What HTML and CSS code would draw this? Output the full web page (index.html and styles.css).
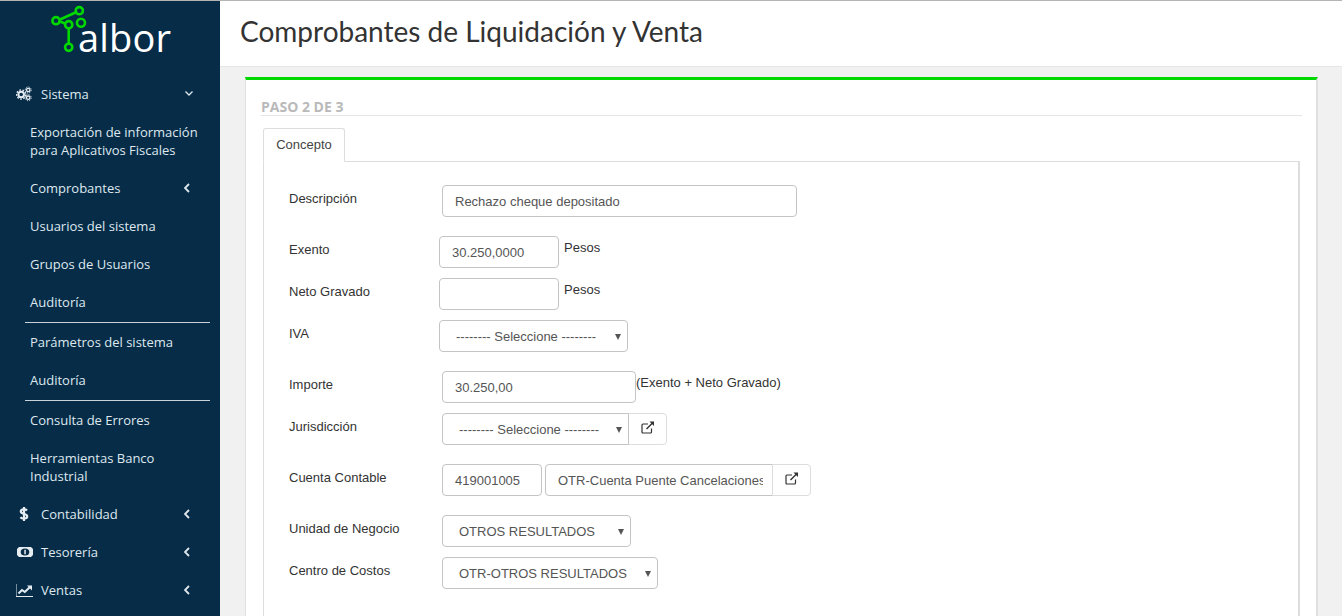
FILE: index.html
```html
<!DOCTYPE html>
<html lang="es">
<head>
<meta charset="utf-8">
<title>Comprobantes de Liquidación y Venta</title>
<link rel="stylesheet" href="styles.css">
</head>
<body>
<div class="app">
  <aside class="sidebar">
    <div class="brand">
      <svg class="brand-mark" width="52" height="50" viewBox="0 0 52 50" fill="none" stroke="#00d900" stroke-width="2.600">
        <path d="M10 14.500 L25.500 7.500"/>
        <path d="M10 16.500 L15 18.500"/>
        <path d="M18.700 23 V39"/>
        <circle cx="29.300" cy="5.700" r="3.600"/>
        <circle cx="6" cy="15.700" r="3.600"/>
        <circle cx="18.700" cy="19.700" r="3.600"/>
        <circle cx="31" cy="17.700" r="4"/>
        <circle cx="18.700" cy="42.300" r="3.600"/>
      </svg>
      <span class="brand-name">albor</span>
    </div>
    <nav class="menu">
      <a class="menu-item top">
        <svg class="mi" width="18" height="16" viewBox="0 0 18 16" fill="none" stroke="#e6edf2"><circle cx="5.200" cy="8.500" r="2.800" stroke-width="2"/><circle cx="5.200" cy="8.500" r="4.600" stroke-width="1.400" stroke-dasharray="1.700 1.500"/><circle cx="12.200" cy="4" r="1.700" stroke-width="1.300"/><circle cx="12.200" cy="4" r="3" stroke-width="1" stroke-dasharray="1.200 1.150"/><circle cx="12.200" cy="11.700" r="1.700" stroke-width="1.300"/><circle cx="12.200" cy="11.700" r="3" stroke-width="1" stroke-dasharray="1.200 1.150"/></svg>
        <span class="ml">Sistema</span>
        <svg class="chev down" width="8" height="5" viewBox="0 0 8 5" fill="none" stroke="#dfe8ee" stroke-width="1.300"><path d="M0.500 0.500 L4 4 L7.500 0.500"/></svg>
      </a>
      <a class="menu-item sub">Exportación de información para Aplicativos Fiscales</a>
      <a class="menu-item sub">Comprobantes
        <svg class="chev left" width="6" height="10" viewBox="0 0 6 10" fill="none" stroke="#dfe8ee" stroke-width="1.800"><path d="M5 1 L1 5 L5 9"/></svg>
      </a>
      <a class="menu-item sub">Usuarios del sistema</a>
      <a class="menu-item sub">Grupos de Usuarios</a>
      <a class="menu-item sub">Auditoría</a>
      <div class="divider"></div>
      <a class="menu-item sub">Parámetros del sistema</a>
      <a class="menu-item sub">Auditoría</a>
      <div class="divider"></div>
      <a class="menu-item sub">Consulta de Errores</a>
      <a class="menu-item sub">Herramientas Banco Industrial</a>
      <a class="menu-item top">
        <svg class="mi" width="18" height="14" viewBox="0 0 18 14" fill="none" stroke="#e6edf2" stroke-width="2.200"><path d="M11 3.500 C9.500 1.800 4.800 2 4.800 4.500 C4.800 7.300 11.200 6.300 11.200 9.400 C11.200 12 6 12 4.400 10.300"/><path d="M8 0 V14"/></svg>
        <span class="ml">Contabilidad</span>
        <svg class="chev left" width="6" height="10" viewBox="0 0 6 10" fill="none" stroke="#dfe8ee" stroke-width="1.800"><path d="M5 1 L1 5 L5 9"/></svg>
      </a>
      <a class="menu-item top">
        <svg class="mi" width="16" height="12" viewBox="0 0 16 12"><rect y="1" width="16" height="10" fill="#e6edf2"/><ellipse cx="8" cy="6" rx="4.300" ry="3.600" fill="#062c48"/><path d="M7.300 3.800 H8.800 V8.200 H7.300 Z" fill="#e6edf2"/><path d="M0 1 H2 L0 3 Z M16 1 H14 L16 3 Z M0 11 H2 L0 9 Z M16 11 H14 L16 9 Z" fill="#062c48"/></svg>
        <span class="ml">Tesorería</span>
        <svg class="chev left" width="6" height="10" viewBox="0 0 6 10" fill="none" stroke="#dfe8ee" stroke-width="1.800"><path d="M5 1 L1 5 L5 9"/></svg>
      </a>
      <a class="menu-item top">
        <svg class="mi" width="18" height="13" viewBox="0 0 18 13" fill="none" stroke="#e6edf2"><path d="M0 0 V12.500 H17" stroke-width="1"/><path d="M2.500 9.500 L6 6 L8.800 8 L13.500 3.500" stroke-width="2"/><path d="M11 1.500 H16 V6.500 Z" fill="#e6edf2" stroke="none"/></svg>
        <span class="ml">Ventas</span>
        <svg class="chev left" width="6" height="10" viewBox="0 0 6 10" fill="none" stroke="#dfe8ee" stroke-width="1.800"><path d="M5 1 L1 5 L5 9"/></svg>
      </a>
    </nav>
  </aside>
  <main class="main">
    <header class="page-head"><h1>Comprobantes de Liquidación y Venta</h1></header>
    <section class="box">
      <h2 class="step">PASO 2 DE 3</h2>
      <div class="tabs"><span class="tab">Concepto</span></div>
      <div class="panel">
        <div class="row r-desc">
          <label>Descripción</label>
          <input class="ctl off w355" value="Rechazo cheque depositado">
        </div>
        <div class="row r-exento">
          <label>Exento</label>
          <input class="ctl w120" value="30.250,0000">
          <span class="unit">Pesos</span>
        </div>
        <div class="row r-neto">
          <label>Neto Gravado</label>
          <input class="ctl w120" value="">
          <span class="unit">Pesos</span>
        </div>
        <div class="row r-iva">
          <label>IVA</label>
          <div class="sel w189"><select class="ctl"><option>-------- Seleccione --------</option></select></div>
        </div>
        <div class="row r-importe">
          <label>Importe</label>
          <input class="ctl off w194" value="30.250,00">
          <span class="unit tight">(Exento + Neto Gravado)</span>
        </div>
        <div class="row r-juris">
          <label>Jurisdicción</label>
          <div class="group off">
            <div class="sel w187"><select class="ctl joined"><option>-------- Seleccione --------</option></select></div>
            <button class="addon" type="button"><svg width="14" height="13" viewBox="0 0 14 13" fill="none" stroke="#333" stroke-width="1.200"><path d="M10.500 7.500 V11 Q10.500 12 9.500 12 H2 Q1 12 1 11 V4 Q1 3 2 3 H7"/><path d="M5.500 8 L12 1.500" stroke-width="1.500"/><path d="M8.500 0.500 H13 V5 Z" fill="#333" stroke="none"/></svg></button>
          </div>
        </div>
        <div class="row r-cuenta">
          <label>Cuenta Contable</label>
          <div class="group off">
            <input class="ctl w100" value="419001005">
            <input class="ctl w228 joined gap3" value="OTR-Cuenta Puente Cancelaciones">
            <button class="addon" type="button"><svg width="14" height="13" viewBox="0 0 14 13" fill="none" stroke="#333" stroke-width="1.200"><path d="M10.500 7.500 V11 Q10.500 12 9.500 12 H2 Q1 12 1 11 V4 Q1 3 2 3 H7"/><path d="M5.500 8 L12 1.500" stroke-width="1.500"/><path d="M8.500 0.500 H13 V5 Z" fill="#333" stroke="none"/></svg></button>
          </div>
        </div>
        <div class="row r-unidad">
          <label>Unidad de Negocio</label>
          <div class="sel off w189"><select class="ctl"><option>OTROS RESULTADOS</option></select></div>
        </div>
        <div class="row r-centro">
          <label>Centro de Costos</label>
          <div class="sel off w216"><select class="ctl"><option>OTR-OTROS RESULTADOS</option></select></div>
        </div>
      </div>
    </section>
  </main>
</div>
</body>
</html>
```
FILE: styles.css
```css
* { box-sizing: border-box; }
html, body { margin: 0; height: 100%; overflow: hidden; }
body { font-family: "Liberation Sans", Arial, sans-serif; font-size: 13px; color: #333; background: #f1f1f1; }
.app { display: flex; height: 616px; border-top: 1px solid #b4b4b4; overflow: hidden; }

.sidebar { width: 220px; flex: none; background: #062c48; color: #dfe8ee; font-family: "Open Sans", "Noto Sans", sans-serif; font-size: 13px; }
.brand { height: 74px; display: flex; align-items: flex-start; padding: 4px 0 0 50px; }
.brand-mark { flex: none; }
.brand-name { font-family: "Open Sans", sans-serif; font-size: 38px; line-height: 40px; color: #fff; margin: 12px 0 0 -24px; letter-spacing: 0.2px; }
.menu { display: flex; flex-direction: column; }
.menu-item { display: flex; align-items: center; line-height: 18px; padding: 10px 15px 10px 0; position: relative; }
.menu-item.top { padding-left: 16px; }
.menu-item.sub { padding-left: 30px; }
.mi { flex: none; width: 18px; margin-right: 7px; }
.chev { position: absolute; top: 50%; margin-top: -5px; }
.chev.left { right: 30px; }
.chev.down { right: 27px; margin-top: -3px; }
.divider { height: 1px; background: #c9d2d9; margin: 1px 10px 0 25px; }

.main { flex: 1; min-width: 0; }
.page-head { height: 66px; background: #fff; border-bottom: 1px solid #e6e6e6; padding: 0 20px; }
.page-head h1 { margin: 0; font-family: Lato, sans-serif; font-weight: 400; font-size: 28px; line-height: 60px; color: #333; }

.box { margin: 10px 24px 0 25px; height: 600px; background: #fff; border-top: 3px solid #00d900; border-left: 1px solid #e0e0e0; border-right: 2px solid #e0e0e0; padding: 19px 14px 0 15px; }
.step { margin: 0; font-family: "Open Sans", sans-serif; font-size: 14px; font-weight: 700; line-height: 16px; height: 17px; color: #b9b9b9; border-bottom: 1px solid #e6e6e6; }
.tabs { margin: 12px 2px 0 2px; height: 34px; border-bottom: 1px solid #ddd; }
.tab { display: inline-block; height: 34px; width: 82px; text-align: center; line-height: 31px; background: #fff; border: 1px solid #ddd; border-bottom-color: #fff; border-radius: 3px 3px 0 0; color: #444; }
.panel { margin: 0 2px 0 2px; height: 500px; border-left: 1px solid #ddd; border-right: 2px solid #ddd; padding: 23px 0 0 25px; }

.row { display: flex; align-items: flex-start; }
.row label { width: 150px; flex: none; padding-top: 7px; line-height: 14px; color: #333; }
.r-exento { margin-top: 19px; }
.r-neto { margin-top: 10px; }
.r-iva { margin-top: 10px; }
.r-importe { margin-top: 19px; }
.r-juris { margin-top: 10px; }
.r-cuenta { margin-top: 19px; }
.r-unidad { margin-top: 19px; }
.r-centro { margin-top: 10px; }

.ctl { height: 32px; border: 1px solid #c4c4c4; border-radius: 4px; background: #fff; font-family: "Liberation Sans", Arial, sans-serif; font-size: 13px; color: #555; padding: 0 12px; outline: none; }
.sel { position: relative; flex: none; }
.sel select { width: 100%; display: block; appearance: none; padding: 0 24px 0 16px; }
.sel::after { content: ""; position: absolute; right: 7px; top: 14px; border-style: solid; border-width: 6px 3.5px 0; border-color: #555 transparent transparent; }
.off { margin-left: 3px; }
.w355 { width: 355px; }
.w120 { width: 120px; }
.w189 { width: 189px; }
.w194 { width: 194px; }
.w187 { width: 187px; }
.w100 { width: 100px; }
.w228 { width: 228px; padding-right: 9px; }
.w216 { width: 216px; }
.gap3 { margin-left: 3px; }
.unit { margin: 4px 0 0 5px; line-height: 15px; }
.unit.tight { margin-left: 0; }
.group { display: flex; }
.joined { border-radius: 4px 0 0 4px; }
.addon { width: 39px; height: 32px; margin-left: -1px; border: 1px solid #ddd; border-radius: 0 4px 4px 0; background: #fff; padding: 0 0 3px; display: flex; align-items: center; justify-content: center; }
```
